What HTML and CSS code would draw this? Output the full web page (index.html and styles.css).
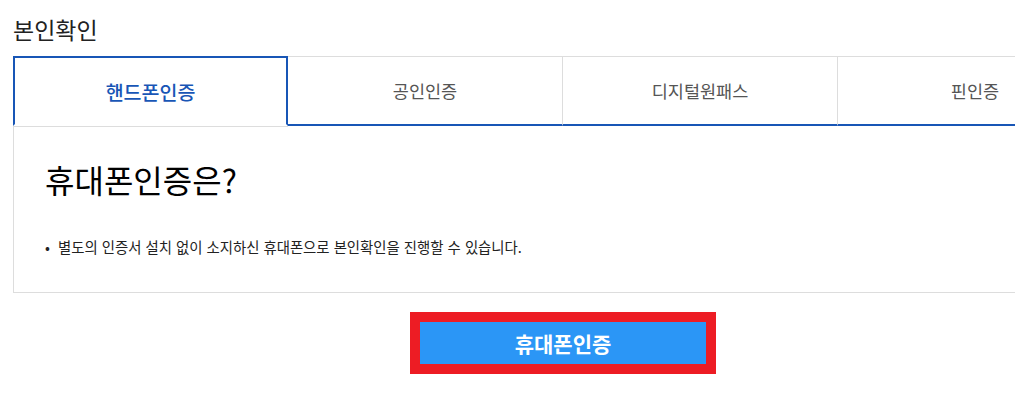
FILE: index.html
```html
<!DOCTYPE html>
<html lang="ko">
<head>
  <meta charset="UTF-8">
  <meta name="viewport" content="width=device-width, initial-scale=1">
  <title>본인확인</title>
  <link rel="stylesheet" href="styles.css">
</head>
<body>
  <div class="page">
    <h2 class="title">본인확인</h2>
    <ul class="tabs">
      <li class="tab active">핸드폰인증</li>
      <li class="tab">공인인증</li>
      <li class="tab">디지털원패스</li>
      <li class="tab">핀인증</li>
    </ul>
    <div class="panel">
      <h3 class="panel-title">휴대폰인증은?</h3>
      <ul class="notes">
        <li>별도의 인증서 설치 없이 소지하신 휴대폰으로 본인확인을 진행할 수 있습니다.</li>
      </ul>
    </div>
    <div class="actions">
      <button class="btn-auth">휴대폰인증</button>
    </div>
  </div>
</body>
</html>
```

FILE: styles.css
```css
:root {
  --blue: #1856b6;
  --line: #dddddd;
  --btn: #2b96f6;
  --red: #ed1c24;
}
*, *::before, *::after {
  box-sizing: border-box;
}
body {
  margin: 0;
  font-family: "Noto Sans CJK KR", "Noto Sans", sans-serif;
  color: #111;
  background: #fff;
}
.page {
  width: 1100px;
  margin-left: 13px;
}
.title {
  margin: 0;
  padding-top: 14px;
  height: 56px;
  font-size: 23px;
  line-height: 30px;
  font-weight: normal;
  color: #222;
}
.tabs {
  display: grid;
  grid-template-columns: repeat(4, 1fr);
  margin: 0;
  padding: 0;
  list-style: none;
}
.tab {
  height: 70px;
  display: flex;
  align-items: center;
  justify-content: center;
  font-size: 17.5px;
  color: #555;
  border-top: 1px solid var(--line);
  border-right: 1px solid var(--line);
  border-bottom: 2px solid var(--blue);
}
.tab.active {
  border: 2px solid var(--blue);
  border-bottom-color: #fff;
  color: var(--blue);
  font-size: 19.5px;
  font-weight: 500;
  box-shadow: 0 1px 0 var(--line);
}
.panel {
  border-left: 1px solid var(--line);
  border-bottom: 1px solid var(--line);
  padding: 30px 31px 35px;
  margin-top: 1px;
}
.panel-title {
  margin: 0;
  font-size: 32px;
  line-height: 44px;
  font-weight: normal;
  color: #000;
}
.notes {
  margin: 36px 0 0;
  padding: 0;
  list-style: none;
  font-size: 14.4px;
  line-height: 20px;
  color: #222;
}
.notes li::before {
  content: "•";
  margin-right: 8px;
}
.actions {
  display: flex;
  justify-content: center;
  padding-top: 19px;
}
.btn-auth {
  width: 306px;
  height: 62px;
  border: 10px solid var(--red);
  background: var(--btn);
  color: #fff;
  font-family: inherit;
  font-size: 21px;
  font-weight: bold;
}
```
